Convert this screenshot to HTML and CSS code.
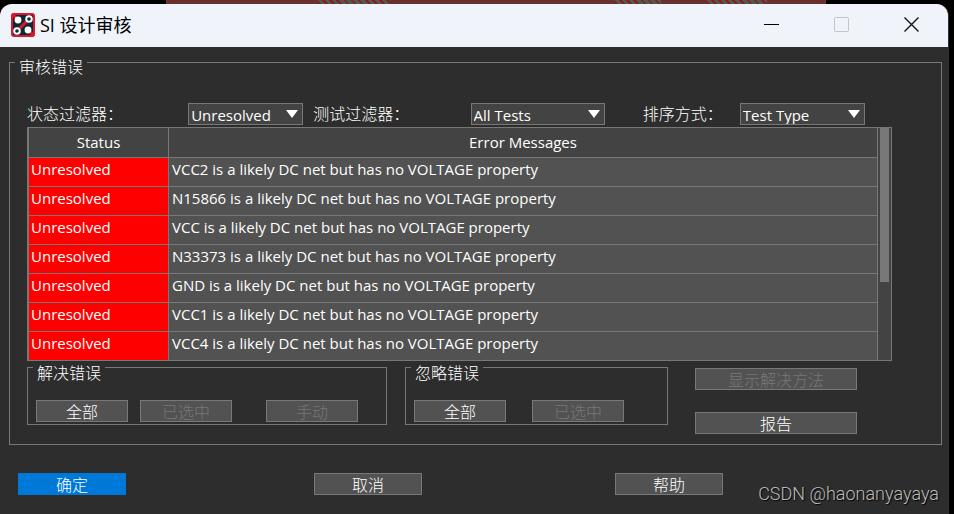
FILE: index.html
```
<!DOCTYPE html>
<html lang="zh-CN">
<head>
    <meta charset="UTF-8">
    <title>SI 设计审核</title>
    <link rel="stylesheet" href="styles.css">
</head>
<body>
<div class="backdrop"></div>
<div class="dialog">
    <header class="titlebar">
        <svg class="app-icon" width="24" height="24" viewBox="0 0 24 24">
            <rect x="1" y="1" width="22" height="22" rx="2" fill="#0b2a36" stroke="#e0142d" stroke-width="2"/>
            <path d="M1 1L7 7M6 18L18 6M17 17L23 23" stroke="#e0142d" stroke-width="3"/>
            <circle cx="7" cy="7" r="3.4" fill="#fff"/>
            <circle cx="17" cy="17" r="3.4" fill="#fff"/>
            <circle cx="18" cy="6" r="2.8" fill="#0b2a36" stroke="#fff" stroke-width="2"/>
            <circle cx="6" cy="18" r="2.8" fill="#0b2a36" stroke="#fff" stroke-width="2"/>
        </svg>
        <h1>SI 设计审核</h1>
        <button class="win-btn" type="button" aria-label="最小化">
            <svg width="16" height="16" viewBox="0 0 16 16"><path d="M0 7.5H15" stroke="#000"/></svg>
        </button>
        <button class="win-btn" type="button" aria-label="最大化" disabled>
            <svg width="16" height="16" viewBox="0 0 16 16"><rect x="0.5" y="0.5" width="14" height="14" rx="1" fill="none" stroke="#c3c5ca"/></svg>
        </button>
        <button class="win-btn" type="button" aria-label="关闭">
            <svg width="16" height="16" viewBox="0 0 16 16"><path d="M0.5 0.5L14.5 14.5M14.5 0.5L0.5 14.5" stroke="#111" stroke-width="1.4"/></svg>
        </button>
    </header>

    <form class="content">
        <fieldset class="group audit">
            <legend>审核错误</legend>

            <div class="filters">
                <label for="statusFilter">状态过滤器：</label>
                <div class="select status">
                    <select id="statusFilter"><option>Unresolved</option></select>
                </div>
                <label for="testFilter">测试过滤器：</label>
                <div class="select tests">
                    <select id="testFilter"><option>All Tests</option></select>
                </div>
                <label for="sortBy">排序方式：</label>
                <div class="select sort">
                    <select id="sortBy"><option>Test Type</option></select>
                </div>
            </div>

            <div class="table-box">
                <table>
                    <thead>
                    <tr><th class="col-status">Status</th><th>Error Messages</th></tr>
                    </thead>
                    <tbody>
                    <tr><td>Unresolved</td><td>VCC2 is a likely DC net but has no VOLTAGE property</td></tr>
                    <tr><td>Unresolved</td><td>N15866 is a likely DC net but has no VOLTAGE property</td></tr>
                    <tr><td>Unresolved</td><td>VCC is a likely DC net but has no VOLTAGE property</td></tr>
                    <tr><td>Unresolved</td><td>N33373 is a likely DC net but has no VOLTAGE property</td></tr>
                    <tr><td>Unresolved</td><td>GND is a likely DC net but has no VOLTAGE property</td></tr>
                    <tr><td>Unresolved</td><td>VCC1 is a likely DC net but has no VOLTAGE property</td></tr>
                    <tr><td>Unresolved</td><td>VCC4 is a likely DC net but has no VOLTAGE property</td></tr>
                    </tbody>
                </table>
                <div class="scrollbar"><div class="thumb"></div></div>
            </div>

            <div class="actions">
                <fieldset class="group resolve">
                    <legend>解决错误</legend>
                    <div class="buttons">
                        <button type="button">全部</button>
                        <button type="button" disabled>已选中</button>
                        <button type="button" class="manual" disabled>手动</button>
                    </div>
                </fieldset>
                <fieldset class="group ignore">
                    <legend>忽略错误</legend>
                    <div class="buttons">
                        <button type="button">全部</button>
                        <button type="button" disabled>已选中</button>
                    </div>
                </fieldset>
                <div class="side">
                    <button type="button" disabled>显示解决方法</button>
                    <button type="button">报告</button>
                </div>
            </div>
        </fieldset>

        <footer class="footer">
            <button type="button" class="primary">确定</button>
            <button type="button">取消</button>
            <button type="button">帮助</button>
        </footer>
    </form>
</div>
<div class="watermark">CSDN @haonanyayaya</div>
</body>
</html>
```
FILE: styles.css
```
* {
    box-sizing: border-box;
}

body {
    margin: 0;
    min-height: 100vh;
    display: flex;
    flex-direction: column;
    background: #000;
    color: #fff;
    font: 15px/20px "Open Sans", "Noto Sans CJK SC", sans-serif;
}

/* strip of the layout window showing behind the dialog */
.backdrop {
    height: 4px;
    margin: 0 128px 0 166px;
    background:
        linear-gradient(90deg, #693030 0 23%, transparent 23% 34%, #693030 34% 68%, transparent 68% 75%, #693030 75% 82%, transparent 82% 91%, #693030 91%),
        repeating-linear-gradient(45deg, #4f5a50 0 3px, #8c1a1e 3px 5px);
}

.dialog {
    flex: 1;
    margin-right: 5px;
    border-right: 1px solid #333;
    border-radius: 12px 12px 0 0;
    background: #2d2d2d;
    overflow: hidden;
}

.titlebar {
    display: flex;
    align-items: center;
    height: 43px;
    padding: 0 1px 2px 11px;
    background: #f0f3fa;
    color: #000;
}

.titlebar h1 {
    flex: 1;
    margin: 0 0 0 5px;
    font-size: 18px;
    font-weight: normal;
}

.win-btn {
    display: flex;
    align-items: center;
    justify-content: center;
    width: 70px;
    height: 41px;
    padding: 0;
    border: 0;
    background: none;
}

.content {
    padding: 2px 6px 0 9px;
}

.group {
    margin: 0;
    min-width: 0;
    border: 1px solid #787878;
}

.group legend {
    margin-left: -3px;
    padding: 10px 4px 0;
    font-size: 16px;
    font-weight: 300;
    line-height: 16px;
}

.audit {
    padding: 28px 49px 10px 17px;
}

.audit > legend {
    margin-left: -12px;
}

.filters {
    display: grid;
    grid-template-columns: 161fr 125fr 157fr 172fr 97fr 152fr;
    align-items: center;
    margin-bottom: 2px;
    font-size: 16px;
    font-weight: 300;
}

.filters label {
    white-space: nowrap;
}

.select {
    position: relative;
}

.select.status {
    width: 115px;
}

.select.tests {
    width: 134px;
}

.select.sort {
    width: 125px;
}

.select::after {
    content: "";
    position: absolute;
    top: 7px;
    right: 5px;
    border: 6px solid transparent;
    border-top: 8px solid #fff;
    border-bottom: 0;
    pointer-events: none;
}

select {
    display: block;
    width: 100%;
    height: 22px;
    padding: 1px 2px 0;
    appearance: none;
    border: 1px solid #787878;
    border-radius: 0;
    background: #434343;
    color: #fff;
    font: 15px/20px "Open Sans", sans-serif;
}

.table-box {
    display: flex;
    border: 1px solid #787878;
    background: #434343;
}

table {
    flex: 1;
    border-collapse: collapse;
    table-layout: fixed;
}

th, td {
    height: 29px;
    padding: 0 3px;
    border: 1px solid #787878;
    border-top: 0;
    background: #525252;
    text-align: left;
    vertical-align: top;
    line-height: 22px;
    white-space: nowrap;
}

tr:last-child td {
    height: 28px;
    border-bottom: 0;
}

th, tr:last-child th {
    background: #434343;
    font-weight: normal;
    text-align: center;
    line-height: 29px;
}

.col-status {
    width: 140px;
}

td:first-child {
    padding-left: 2px;
    background: #f00;
}

.scrollbar {
    width: 13px;
    padding: 0 2px;
}

.thumb {
    height: 154px;
    background: #787878;
}

.actions {
    display: flex;
    align-items: flex-start;
}

.resolve {
    width: 360px;
    margin-right: 18px;
}

.ignore {
    width: 263px;
    margin-right: 27px;
}

.resolve, .ignore {
    margin-top: -6px;
    padding: 19px 8px 2px;
}

.buttons {
    display: flex;
    gap: 12px;
}

.ignore .buttons {
    gap: 26px;
}

.buttons .manual {
    margin-left: 22px;
}

.side {
    display: flex;
    flex-direction: column;
    gap: 22px;
    width: 162px;
    padding-top: 7px;
}

.content button {
    width: 92px;
    height: 22px;
    padding: 0;
    border: 1px solid #787878;
    background: #525252;
    color: #fff;
    font: 300 16px/20px "Noto Sans CJK SC", sans-serif;
}

.content button:disabled {
    color: #787878;
}

.content .side button {
    width: 100%;
}

.footer {
    display: grid;
    grid-template-columns: 296fr 301fr 327fr;
    padding: 28px 0 0 9px;
}

.content .footer button {
    width: 108px;
}

.content .footer .primary {
    border-color: #0078d7;
    background: #0078d7;
}

.watermark {
    position: absolute;
    right: 15px;
    bottom: 10px;
    color: #bbb;
    font: 300 18px/20px Roboto, sans-serif;
    text-shadow: 1px 1px 1px #000;
}
```
